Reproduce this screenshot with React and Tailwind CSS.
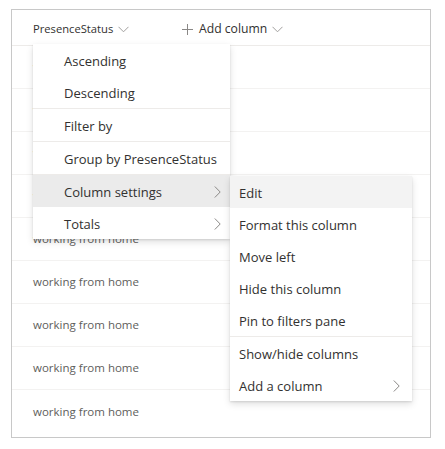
import React from 'react';

const FONT = { fontFamily: '"Open Sans", "Noto Sans", sans-serif' };

const ChevronDown = () => (
  <svg width="11" height="7" viewBox="0 0 11 7" className="ml-[5px] mt-[1px]">
    <path d="M0.5 0.8 L5.5 5.8 L10.5 0.8" fill="none" stroke="#a19f9d" strokeWidth="1" />
  </svg>
);

const ChevronRight = () => (
  <svg width="7" height="12" viewBox="0 0 7 12" className="-mt-[3px]">
    <path d="M0.8 0.5 L6.2 6 L0.8 11.5" fill="none" stroke="#8a8886" strokeWidth="1" />
  </svg>
);

const Plus = () => (
  <svg width="11" height="11" viewBox="0 0 11 11" className="mr-[6px]">
    <path d="M5.5 0 V11 M0 5.5 H11" fill="none" stroke="#8a8886" strokeWidth="1" />
  </svg>
);

const MenuItem = ({ label, arrow, bg, pad = 'pl-[31px]', pr = 'pr-[9px]' }) => (
  <div className={`h-[32px] flex items-center justify-between ${pad} ${pr} pt-[4px] text-[13px] text-[#323130] whitespace-nowrap ${bg || ''}`}>
    <span>{label}</span>
    {arrow && <ChevronRight />}
  </div>
);

const Divider = () => <div className="h-px bg-[#edebe9]" />;

export default function App() {
  const rows = Array.from({ length: 9 });

  return (
    <div className="w-[445px] h-[449px] bg-white relative pt-[9px] pl-[11px]" style={FONT}>
      {/* TABLE FRAME */}
      <div className="w-[420px] h-[429px] border border-[#c8c8c8]">
        <div className="h-[36px] flex items-center pt-[4px] border-b border-[#edebe9] text-[11.2px] text-[#323130] whitespace-nowrap">
          <div className="flex items-center pl-[21px] w-[170px]">
            <span>PresenceStatus</span>
            <ChevronDown />
          </div>
          <div className="flex items-center">
            <Plus />
            <span className="text-[12.2px]">Add column</span>
            <ChevronDown />
          </div>
        </div>
        {rows.map((_, i) => (
          <div
            key={i}
            className={`h-[43px] flex items-center pl-[21px] text-[11.5px] text-[#605e5c] whitespace-nowrap ${i < 8 ? 'border-b border-[#f3f2f1]' : ''}`}
          >
            working from home
          </div>
        ))}
      </div>

      {/* COLUMN MENU */}
      <div className="absolute left-[33px] top-[44px] w-[197px] bg-white shadow-[0_3px_7px_rgba(0,0,0,0.13),0_0.6px_1.8px_rgba(0,0,0,0.11)]">
        <MenuItem label="Ascending" />
        <MenuItem label="Descending" />
        <Divider />
        <MenuItem label="Filter by" />
        <Divider />
        <MenuItem label="Group by PresenceStatus" />
        <Divider />
        <MenuItem label="Column settings" arrow bg="bg-[#ebebeb]" />
        <MenuItem label="Totals" arrow />
      </div>

      {/* SUBMENU */}
      <div className="absolute left-[230px] top-[176px] w-[182px] bg-white shadow-[0_3px_7px_rgba(0,0,0,0.13),0_0.6px_1.8px_rgba(0,0,0,0.11)]">
        <MenuItem label="Edit" bg="bg-[#f3f3f3]" pad="pl-[9px]" />
        <MenuItem label="Format this column" pad="pl-[9px]" />
        <MenuItem label="Move left" pad="pl-[9px]" />
        <MenuItem label="Hide this column" pad="pl-[9px]" />
        <MenuItem label="Pin to filters pane" pad="pl-[9px]" />
        <Divider />
        <MenuItem label="Show/hide columns" pad="pl-[9px]" />
        <MenuItem label="Add a column" arrow pad="pl-[9px]" pr="pr-[12px]" />
      </div>
    </div>
  );
}
